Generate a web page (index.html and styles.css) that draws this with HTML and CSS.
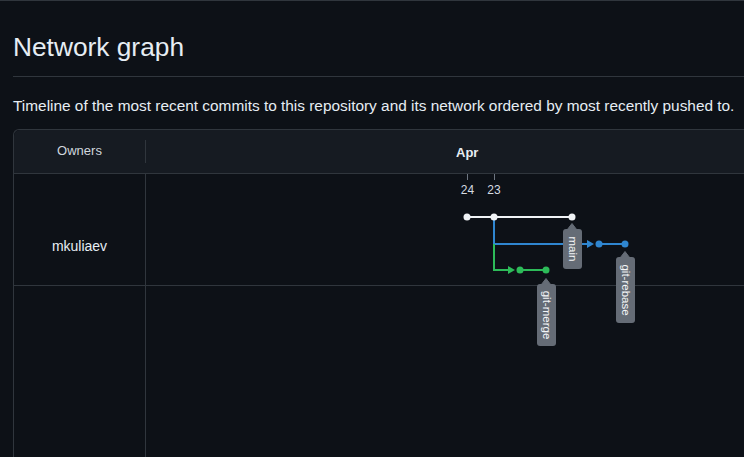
FILE: index.html
```html
<!DOCTYPE html>
<html lang="en">
<head>
<meta charset="utf-8">
<title>Network graph</title>
<link rel="stylesheet" href="styles.css">
</head>
<body>
<main class="page">
  <h2 class="title">Network graph</h2>
  <p class="lead">Timeline of the most recent commits to this repository and its network ordered by most recently pushed to.</p>
  <div class="network">
    <div class="thead">
      <div class="th-owners">Owners</div>
      <div class="th-divider"></div>
      <div class="th-months"><span class="month">Apr</span></div>
    </div>
    <div class="row row-first">
      <div class="owner">mkuliaev</div>
      <div class="lane"></div>
    </div>
    <div class="row row-rest">
      <div class="owner"></div>
      <div class="lane"></div>
    </div>
    <svg class="graph" width="598" height="283" viewBox="146 174 598 283" xmlns="http://www.w3.org/2000/svg">
      <g class="ticks">
        <line x1="467.5" y1="174" x2="467.5" y2="180"/>
        <line x1="494.5" y1="174" x2="494.5" y2="180"/>
      </g>
      <g class="dates">
        <text x="467.5" y="194">24</text>
        <text x="494" y="194">23</text>
      </g>
      <g class="branch blue">
        <path d="M494 217 V244 H589"/>
        <polygon points="587,240 594,244 587,248"/>
        <line x1="599" y1="244" x2="625" y2="244"/>
        <circle cx="599" cy="244" r="3.5"/>
        <circle cx="625" cy="244" r="3.5"/>
      </g>
      <g class="branch green">
        <path d="M494 244 V270 H509"/>
        <polygon points="508,266 515,270 508,274"/>
        <line x1="520" y1="270" x2="546" y2="270"/>
        <circle cx="520" cy="270" r="3.5"/>
        <circle cx="546" cy="270" r="3.5"/>
      </g>
      <g class="branch white">
        <line x1="467" y1="217" x2="572" y2="217"/>
        <circle cx="467" cy="217" r="3.5"/>
        <circle cx="494" cy="217" r="3.5"/>
        <circle cx="572" cy="217" r="3.5"/>
      </g>
      <g class="label">
        <polygon points="567,230 572,223.5 577,230"/>
        <rect x="563" y="229" width="19" height="40" rx="3"/>
        <text transform="translate(572.5 249) rotate(90)">main</text>
      </g>
      <g class="label">
        <polygon points="541,285 546,278.5 551,285"/>
        <rect x="537" y="284" width="19" height="62" rx="3"/>
        <text transform="translate(546.5 315) rotate(90)">git-merge</text>
      </g>
      <g class="label">
        <polygon points="620,258 625,251.5 630,258"/>
        <rect x="616" y="257" width="19" height="66" rx="3"/>
        <text transform="translate(625.5 290) rotate(90)">git-rebase</text>
      </g>
    </svg>
  </div>
</main>
</body>
</html>
```
FILE: styles.css
```css
html, body {
  margin: 0;
  padding: 0;
  overflow: hidden;
}

body {
  background: #0d1117;
  border-top: 1px solid #30363d;
  color: #e6edf3;
  font-family: "Liberation Sans", Arial, sans-serif;
  height: 456px;
}

.page {
  padding-left: 13px;
  width: 731px;
}

.title {
  margin: 30px 0 0;
  padding-bottom: 12px;
  font-size: 26.3px;
  font-weight: 400;
  line-height: 32.5px;
  color: #e6edf3;
  border-bottom: 1px solid #30363d;
}

.lead {
  margin: 18px 0 12px;
  font-size: 15.4px;
  line-height: 22.5px;
  color: #e6edf3;
  white-space: nowrap;
}

.network {
  position: relative;
  border-top: 1px solid #30363d;
  border-left: 1px solid #30363d;
  border-top-left-radius: 6px;
  width: 730px;
}

.thead {
  display: flex;
  align-items: center;
  height: 43px;
  background: #161b22;
  border-bottom: 1px solid #30363d;
  border-top-left-radius: 6px;
}

.th-owners {
  width: 131px;
  text-align: center;
  font-size: 13px;
  color: #d0d7de;
  padding-bottom: 2px;
}

.th-divider {
  width: 1px;
  height: 23px;
  background: #30363d;
  margin-top: -1px;
}

.th-months {
  flex: 1;
  padding-left: 310px;
}

.month {
  font-size: 13px;
  font-weight: 700;
  color: #e6edf3;
}

.row {
  display: flex;
}

.row-first {
  height: 112px;
  border-bottom: 1px solid #30363d;
  box-sizing: border-box;
}

.row-rest {
  height: 171px;
}

.owner {
  width: 132px;
  box-sizing: border-box;
  border-right: 1px solid #30363d;
  text-align: center;
  font-size: 14px;
  line-height: 20px;
  color: #e6edf3;
}

.row-first .owner {
  padding-top: 62px;
}

.lane {
  flex: 1;
}

.graph {
  position: absolute;
  left: 132px;
  top: 44px;
  overflow: hidden;
}

.ticks line {
  stroke: #6e7681;
  stroke-width: 1;
}

.dates text {
  font-family: "Liberation Sans", Arial, sans-serif;
  font-size: 12px;
  fill: #d5dbe1;
  text-anchor: middle;
}

.branch path,
.branch line {
  fill: none;
  stroke-width: 2;
}

.branch.white line { stroke: #f0f3f6; }
.branch.white circle { fill: #f0f3f6; }

.branch.blue path,
.branch.blue line { stroke: #2f86d0; }
.branch.blue polygon,
.branch.blue circle { fill: #2f86d0; }

.branch.green path,
.branch.green line { stroke: #2dbb59; }
.branch.green polygon,
.branch.green circle { fill: #2dbb59; }

.label rect,
.label polygon {
  fill: #656c76;
}

.label polygon {
  stroke: #656c76;
  stroke-width: 1;
  stroke-linejoin: round;
}

.label text {
  font-family: "Liberation Sans", Arial, sans-serif;
  font-size: 11.5px;
  fill: #f4f5f6;
  text-anchor: middle;
  dominant-baseline: central;
}
```
